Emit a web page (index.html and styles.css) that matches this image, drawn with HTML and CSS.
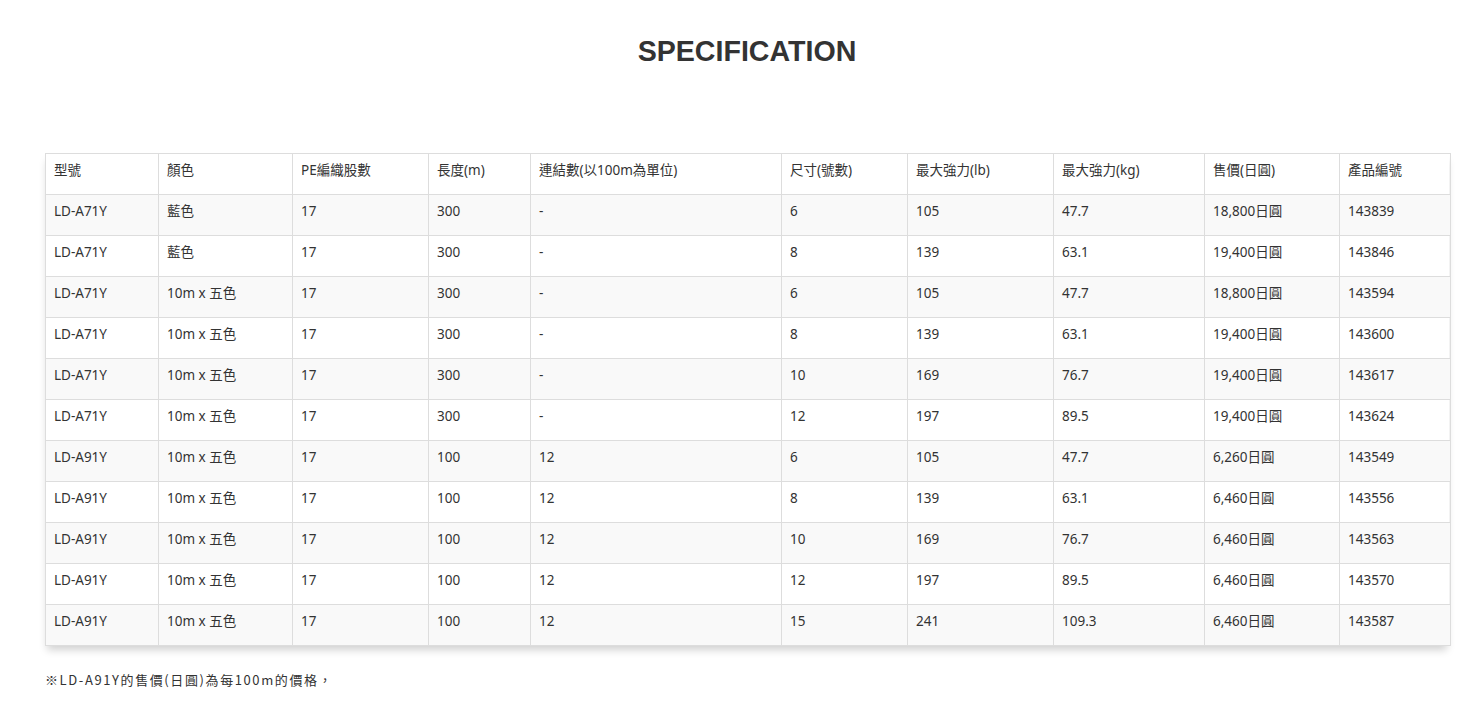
FILE: index.html
```html
<!DOCTYPE html>
<html lang="zh-Hant">
<head>
<meta charset="utf-8">
<title>SPECIFICATION</title>
<link rel="stylesheet" href="styles.css">
</head>
<body>
<main class="page">
  <h1 class="title">SPECIFICATION</h1>
  <div class="table-wrap">
    <table class="spec">
      <colgroup>
        <col class="c1"><col class="c2"><col class="c3"><col class="c4"><col class="c5">
        <col class="c6"><col class="c7"><col class="c8"><col class="c9"><col class="c10">
      </colgroup>
      <thead>
        <tr><th>型號</th><th>顏色</th><th>PE編織股數</th><th>長度(m)</th><th>連結數(以100m為單位)</th><th>尺寸(號數)</th><th>最大強力(lb)</th><th>最大強力(kg)</th><th>售價(日圓)</th><th>產品編號</th></tr>
      </thead>
      <tbody>
        <tr><td>LD-A71Y</td><td>藍色</td><td>17</td><td>300</td><td>-</td><td>6</td><td>105</td><td>47.7</td><td>18,800日圓</td><td>143839</td></tr>
        <tr><td>LD-A71Y</td><td>藍色</td><td>17</td><td>300</td><td>-</td><td>8</td><td>139</td><td>63.1</td><td>19,400日圓</td><td>143846</td></tr>
        <tr><td>LD-A71Y</td><td>10m x 五色</td><td>17</td><td>300</td><td>-</td><td>6</td><td>105</td><td>47.7</td><td>18,800日圓</td><td>143594</td></tr>
        <tr><td>LD-A71Y</td><td>10m x 五色</td><td>17</td><td>300</td><td>-</td><td>8</td><td>139</td><td>63.1</td><td>19,400日圓</td><td>143600</td></tr>
        <tr><td>LD-A71Y</td><td>10m x 五色</td><td>17</td><td>300</td><td>-</td><td>10</td><td>169</td><td>76.7</td><td>19,400日圓</td><td>143617</td></tr>
        <tr><td>LD-A71Y</td><td>10m x 五色</td><td>17</td><td>300</td><td>-</td><td>12</td><td>197</td><td>89.5</td><td>19,400日圓</td><td>143624</td></tr>
        <tr><td>LD-A91Y</td><td>10m x 五色</td><td>17</td><td>100</td><td>12</td><td>6</td><td>105</td><td>47.7</td><td>6,260日圓</td><td>143549</td></tr>
        <tr><td>LD-A91Y</td><td>10m x 五色</td><td>17</td><td>100</td><td>12</td><td>8</td><td>139</td><td>63.1</td><td>6,460日圓</td><td>143556</td></tr>
        <tr><td>LD-A91Y</td><td>10m x 五色</td><td>17</td><td>100</td><td>12</td><td>10</td><td>169</td><td>76.7</td><td>6,460日圓</td><td>143563</td></tr>
        <tr><td>LD-A91Y</td><td>10m x 五色</td><td>17</td><td>100</td><td>12</td><td>12</td><td>197</td><td>89.5</td><td>6,460日圓</td><td>143570</td></tr>
        <tr><td>LD-A91Y</td><td>10m x 五色</td><td>17</td><td>100</td><td>12</td><td>15</td><td>241</td><td>109.3</td><td>6,460日圓</td><td>143587</td></tr>
      </tbody>
    </table>
  </div>
  <p class="note">※LD-A91Y的售價(日圓)為每100m的價格，</p>
</main>
</body>
</html>
```

FILE: styles.css
```css
html, body {
  margin: 0;
  padding: 0;
  background: #fff;
}

body {
  font-family: "Noto Sans", "Noto Sans CJK TC", sans-serif;
  color: #333;
}

.page {
  padding: 34px 0 0 45px;
  width: 1404px;
}

.title {
  margin: 0;
  text-align: center;
  font-family: "Liberation Sans", Arial, sans-serif;
  font-weight: bold;
  font-size: 28.6px;
  line-height: 34px;
  color: #333;
}

.table-wrap {
  margin-top: 85px;
  box-shadow: 0 6px 8px -2px rgba(0, 0, 0, 0.18);
}

.spec {
  width: 1405px;
  table-layout: fixed;
  border-collapse: collapse;
  font-size: 13.5px;
  line-height: 18px;
  color: #333;
}

.spec th,
.spec td {
  border: 1px solid #ddd;
  padding: 7px 8px 15px 8px;
  text-align: left;
  font-weight: normal;
  white-space: nowrap;
  overflow: hidden;
}

.spec tbody tr:nth-child(odd) {
  background: #f9f9f9;
}

.c1 { width: 113px; }
.c2 { width: 134px; }
.c3 { width: 136px; }
.c4 { width: 102px; }
.c5 { width: 251px; }
.c6 { width: 126px; }
.c7 { width: 146px; }
.c8 { width: 151px; }
.c9 { width: 135px; }
.c10 { width: 111px; }

.note {
  margin: 25px 0 0 0;
  font-family: "Noto Sans CJK TC", "Noto Sans", sans-serif;
  font-size: 13px;
  line-height: 18px;
  letter-spacing: 1.6px;
  color: #333;
}
```
